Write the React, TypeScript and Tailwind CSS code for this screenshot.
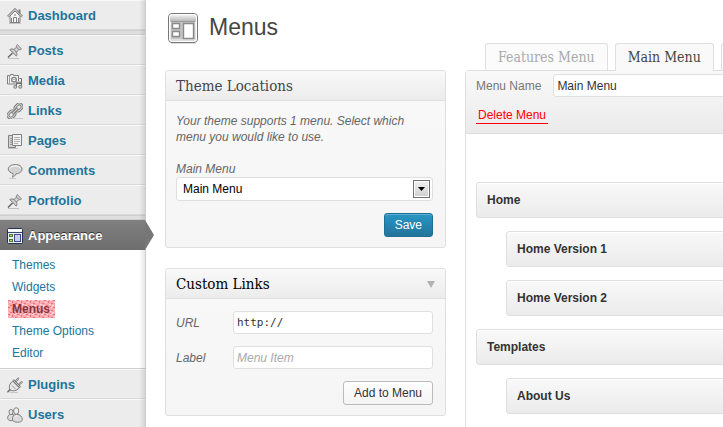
import React from "react";

const SERIF = "font-['DejaVu_Serif_Condensed','DejaVu_Serif',serif]";

function Icon({ children }: { children: React.ReactNode }) {
  return (
    <svg className="h-4 w-4 shrink-0" viewBox="0 0 16 16" fill="none" stroke="#808080" aria-hidden="true">
      {children}
    </svg>
  );
}

const HomeIcon = () => (
  <Icon>
    <path d="M3 8v6.5h10V8L8 3z" fill="#f4f4f4" />
    <path d="M0.8 8.6 8 1.4l7.2 7.2" strokeWidth="2.4" stroke="#8c8c8c" />
    <path d="M1 8.6 8 1.6l7 7" strokeWidth="0.8" stroke="#f4f4f4" />
    <path d="M12.5 1.5v4" strokeWidth="2" />
    <path d="M6.5 14V9.5h3V14M4.5 10v4M11.5 10v4" />
    <path d="M7 7h2" />
    <path d="M2 15.5h12" stroke="#c4c4c4" />
  </Icon>
);

const PinIcon = () => (
  <Icon>
    <path d="M1 14.500 5.500 10" strokeWidth="1.500" stroke="#666" />
    <path d="M2.800 6.600c1.500-.9 3-.7 4.200-.1l2.600-2.400c-.5-1-.3-1.800.6-2.500l4.300 4.300c-.8.8-1.700 1-2.600.6L9.400 9.200c.7 1.300.7 2.700-.1 4z" fill="#d2d2d2" />
    <path d="m7 6.500 2.400 2.700M9.600 4.100l2.300 2.400" />
    <path d="M4.500 8.200 8 11.600" stroke="#999" />
    <path d="M1 15.500h11" stroke="#c0c0c0" />
  </Icon>
);

const MediaIcon = () => (
  <Icon>
    <path d="M.5 2.500h3v-1h3v1h5v8.500H.5z" fill="#f2f2f2" />
    <path d="M2.500 2.500v8" stroke="#999" />
    <circle cx="7" cy="6.700" r="2.300" fill="#fff" strokeWidth="1.400" />
    <path d="M6.500 6.500h1" stroke="#666" />
    <path d="M10.500 14V9.500M11 9.500h4" stroke="#ececec" strokeWidth="3" />
    <path d="M9.500 14V9.200h5V13M9.500 10.500h5M12.500 5.500h2v4" stroke="#6e6e6e" />
    <circle cx="8.300" cy="13.800" r="1.500" fill="#ccc" />
    <circle cx="13.300" cy="13.800" r="1.500" fill="#ccc" />
  </Icon>
);

const LinkIcon = () => (
  <Icon>
    <g transform="rotate(-45 8 8)">
      <rect x="-.8" y="5.300" width="7.600" height="5.400" rx="2.700" stroke="#757575" strokeWidth="2.800" />
      <rect x="9.200" y="5.300" width="7.600" height="5.400" rx="2.700" stroke="#757575" strokeWidth="2.800" />
      <rect x="-.8" y="5.300" width="7.600" height="5.400" rx="2.700" stroke="#dadada" strokeWidth="1" />
      <rect x="9.200" y="5.300" width="7.600" height="5.400" rx="2.700" stroke="#dadada" strokeWidth="1" />
      <path d="M4 8h8" stroke="#757575" strokeWidth="2.800" />
      <path d="M4.500 8h7" stroke="#dadada" />
    </g>
    <path d="M5 15.500h11" stroke="#c8c8c8" />
  </Icon>
);

const PagesIcon = () => (
  <Icon>
    <path d="M1.500 2.500h7v12h-7z" fill="#d4d4d4" />
    <path d="M3 5.500h2M3 7.500h2M3 9.500h2M3 11.500h2" stroke="#999" />
    <path d="M5.500 1.500h9v11h-9z" fill="#f4f4f4" />
    <path d="M7 4.500h6M7 6.500h6M7 8.500h6M7 10.500h4" stroke="#b0b0b0" />
    <path d="M1 15.500h10" stroke="#c4c4c4" />
  </Icon>
);

const CommentIcon = () => (
  <Icon>
    <path d="M8.300 1.500c4 0 6.700 1.900 6.700 4.600s-2.500 4.600-6 4.700c-.6 1.600-2 2.900-3.800 3.400.8-1.200 1-2.400.8-3.700C3.200 9.900 1.300 8.300 1.300 6.100c0-2.700 3-4.600 7-4.600z" fill="#d2d2d2" />
    <path d="M3 5.500c.6-1.600 2.600-2.500 5.200-2.500 2.700 0 4.600.9 5.200 2.500" stroke="#fff" />
    <path d="M2 15.500h7" stroke="#c8c8c8" />
  </Icon>
);

const AppearanceIcon = () => (
  <Icon>
    <rect x=".5" y=".5" width="15" height="15" rx="1" fill="#e9eef6" stroke="#27304d" />
    <path d="M1 2.500h14" stroke="#fff" strokeWidth="2" />
    <path d="M1 4.500h14" stroke="#3c4666" />
    <rect x="2.500" y="6.500" width="3" height="2" fill="#b9dd8a" stroke="#4b7a2c" />
    <rect x="2.500" y="11.500" width="3" height="2" fill="#b9dd8a" stroke="#4b7a2c" />
    <rect x="7.500" y="6.500" width="6" height="7" fill="#c5ccf4" stroke="#3c4996" />
  </Icon>
);

const PlugIcon = () => (
  <Icon>
    <path d="M.3 15c1.200-.3 1.700-1.300 3-2.800" stroke="#777" strokeWidth="1.800" />
    <path d="m8.800 4.200 3-3.200M12 7.500l3.300-3" strokeWidth="2" stroke="#777" />
    <path d="m9 4 2.600-2.800M12.200 7.300l2.900-2.600" strokeWidth=".7" stroke="#eee" />
    <path d="M3 12.800C1.600 9.900 2.400 6.800 5.700 4l6.600 6.800c-2.900 3.300-6.300 3.700-9.300 2z" fill="#e6e6e6" stroke="#707070" />
    <path d="m6.200 3 7 7.200" stroke="#707070" strokeWidth="2" />
    <path d="m6.400 3.300 6.400 6.600" stroke="#eee" strokeWidth=".7" />
    <path d="M5 8.500 8.500 12" stroke="#999" />
    <path d="M3 15.500h8" stroke="#c8c8c8" />
  </Icon>
);

const UsersIcon = () => (
  <Icon>
    <path d="M.7 11.500C.5 9 1.500 7.700 3.600 7.500h3v5.800c-2.500.9-5.300.5-5.900-1.800z" fill="#dcdcdc" />
    <ellipse cx="4" cy="5" rx="2" ry="2.600" fill="#e8e8e8" />
    <ellipse cx="9.200" cy="4" rx="2.600" ry="3.300" fill="#eee" />
    <path d="M5.500 12.700c-.4-3 1.200-5.200 4.200-5.400 3.400-.1 5.600 2.400 5.600 5.400 0 3.300-9.200 3.500-9.800 0z" fill="#dcdcdc" />
    <path d="M7.500 10c.7-.9 1.500-1.300 2.700-1.300" stroke="#fff" />
  </Icon>
);

function MenuLink({ icon, label, active }: { icon: React.ReactNode; label: string; active?: boolean }) {
  return (
    <a
      href="#"
      aria-current={active ? "page" : undefined}
      className={
        active
          ? "relative flex h-[30px] items-center gap-[5px] bg-linear-to-b from-[#808080] to-[#6d6d6d] pt-[2px] pl-[7px] text-[13px] font-bold text-white"
          : "flex h-[30px] items-center gap-[5px] border-t border-b border-t-[#f9f9f9] border-b-[#d9d9d9] pt-[2px] pl-[7px] text-[13px] font-bold text-[#21759b]"
      }
    >
      {icon}
      <span className={active ? "[text-shadow:0_-1px_0_#333]" : ""}>{label}</span>
      {active && (
        <svg className="absolute top-0 left-full h-[30px] w-[9px]" viewBox="0 0 9 30" aria-hidden="true">
          <path d="M0 0 9 15 0 30z" fill="#777" />
        </svg>
      )}
    </a>
  );
}

const Separator = () => <div className="h-[5px] border-t border-b border-[#cfcfcf] bg-[#dfdfdf]" />;

function Sidebar() {
  return (
    <nav className="relative w-[146px] shrink-0 border-r border-[#ccc] bg-[#ececec]">
      <div className="pointer-events-none absolute inset-y-0 right-0 w-[6px] bg-linear-to-r from-black/0 to-black/10" />
      <MenuLink icon={<HomeIcon />} label="Dashboard" />
      <Separator />
      <MenuLink icon={<PinIcon />} label="Posts" />
      <MenuLink icon={<MediaIcon />} label="Media" />
      <MenuLink icon={<LinkIcon />} label="Links" />
      <MenuLink icon={<PagesIcon />} label="Pages" />
      <MenuLink icon={<CommentIcon />} label="Comments" />
      <MenuLink icon={<PinIcon />} label="Portfolio" />
      <Separator />
      <MenuLink icon={<AppearanceIcon />} label="Appearance" active />
      <ul className="border-b border-[#d0d0d0] bg-white py-1 pl-2 text-xs leading-[22px] text-[#21759b]">
        <li><a href="#" className="px-1">Themes</a></li>
        <li><a href="#" className="px-1">Widgets</a></li>
        <li className="flex h-[22px] items-center">
          <a href="#" className="relative pr-[5px] pl-1 leading-[18px] font-bold text-[#863543]">
            <svg className="absolute inset-0 h-full w-full" aria-hidden="true">
              <defs>
                <pattern id="speckle" width="9" height="7" patternUnits="userSpaceOnUse">
                  <rect width="9" height="7" fill="#fbaab0" />
                  <path d="M0 0h2v1H0zM4 1h1v2H4zM7 3h2v1H7zM2 5h2v1H2zM6 6h1v1H6z" fill="#f0707c" />
                  <path d="M3 0h1v1H3zM6 0h2v1H6zM1 2h2v1H1zM5 4h2v1H5zM0 5h1v1H0zM8 5h1v2H8z" fill="#fdd4d8" />
                </pattern>
              </defs>
              <rect width="100%" height="100%" fill="url(#speckle)" />
            </svg>
            <span className="relative">Menus</span>
          </a>
        </li>
        <li><a href="#" className="px-1">Theme Options</a></li>
        <li><a href="#" className="px-1">Editor</a></li>
      </ul>
      <MenuLink icon={<PlugIcon />} label="Plugins" />
      <MenuLink icon={<UsersIcon />} label="Users" />
    </nav>
  );
}

function Box({ title, muted, toggle, children }: { title: string; muted?: boolean; toggle?: boolean; children: React.ReactNode }) {
  return (
    <section className="rounded-[3px] border border-[#dfdfdf] bg-linear-to-b from-[#f9f9f9] to-[#f5f5f5]">
      <header className="flex h-[30px] items-center justify-between rounded-t-[3px] border-b border-[#dfdfdf] bg-linear-to-b from-[#f9f9f9] to-[#ececec] px-[10px] pt-[2px]">
        <h3 className={`${SERIF} text-[15px] ${muted ? "text-[#464646]" : "text-black"}`}>{title}</h3>
        {toggle && (
          <button type="button" aria-label="Toggle panel">
            <svg className="h-[7px] w-[8px]" viewBox="0 0 8 7" aria-hidden="true">
              <path d="M0 0h8L4 7z" fill="#b2b2b2" />
            </svg>
          </button>
        )}
      </header>
      {children}
    </section>
  );
}

const FIELD = "h-[23px] min-w-0 rounded-[3px] border border-[#dfdfdf] bg-white px-[3px] text-xs text-[#333]";

const menuItems = [
  { label: "Home", child: false },
  { label: "Home Version 1", child: true },
  { label: "Home Version 2", child: true },
  { label: "Templates", child: false },
  { label: "About Us", child: true },
];

export default function App() {
  return (
    <div className="flex h-screen overflow-hidden bg-white font-['Liberation_Sans',Arial,sans-serif] text-xs text-[#333]">
      <Sidebar />
      <main className="min-w-0 flex-1 pl-[19px]">
        <div className="flex items-start">
          <div className="w-[281px] shrink-0">
            <div className="flex h-[70px] items-start gap-[10px] pt-3 pl-[2px]">
              <svg className="h-8 w-8" viewBox="0 0 32 32" aria-hidden="true">
                <defs>
                  <linearGradient id="frame" x1="0" y1="0" x2="0" y2="1">
                    <stop offset="0" stopColor="#fff" />
                    <stop offset=".25" stopColor="#bbb" />
                    <stop offset=".3" stopColor="#eee" />
                    <stop offset="1" stopColor="#ddd" />
                  </linearGradient>
                </defs>
                <path d="M4 31.500h25" stroke="#ddd" />
                <rect x="1.500" y="1.500" width="29" height="29" rx="3.500" fill="url(#frame)" stroke="#777" />
                <rect x="2.500" y="2.500" width="27" height="27" rx="2.500" fill="none" stroke="#fff" />
                <path d="M4 9h24v18H4z" fill="#c4c4c4" />
                <path d="M4 9.500h24" stroke="#999" />
                <path d="M5.500 11.500h7v5h-7zM5.500 19.500h7v5h-7zM16.500 11.500h10v15h-10z" fill="#fff" stroke="#8a8a8a" strokeWidth="1.400" />
              </svg>
              <h2 className="text-[23px] leading-[30px] text-[#464646]">Menus</h2>
            </div>
            <div className="flex flex-col gap-5">
              <Box title="Theme Locations" muted>
                <form className="flex flex-col pt-3 pr-3 pb-[10px] pl-[10px]">
                  <p className="leading-4 text-[#666] italic">
                    Your theme supports 1 menu. Select which menu you would like to use.
                  </p>
                  <label htmlFor="location" className="mt-4 leading-4 text-[#666] italic">Main Menu</label>
                  <div className="relative">
                    <select id="location" className="h-6 w-full appearance-none rounded-[3px] border border-[#dfdfdf] bg-white pl-[6px] text-xs text-black">
                      <option>Main Menu</option>
                    </select>
                    <span className="pointer-events-none absolute top-[3px] right-[3px] flex h-[18px] w-[17px] items-center justify-center border border-[#707070] bg-linear-to-b from-[#f2f2f2] to-[#cfcfcf] shadow-[inset_0_0_0_1px_#fff]">
                      <svg className="h-1 w-[7px]" viewBox="0 0 7 4" aria-hidden="true">
                        <path d="M0 0h7L3.500 4z" fill="#000" />
                      </svg>
                    </span>
                  </div>
                  <button type="button" className="mt-3 h-6 self-end rounded-[3px] border border-[#1f6f95] bg-linear-to-b from-[#2a95c5] to-[#21759b] px-[10px] text-white shadow-[inset_0_1px_0_#5aaed3]">
                    Save
                  </button>
                </form>
              </Box>
              <Box title="Custom Links" toggle>
                <form className="flex flex-col gap-3 pt-3 pr-3 pb-[10px] pl-[10px]">
                  <div className="flex items-center">
                    <label htmlFor="url" className="w-[57px] shrink-0 text-[#666] italic">URL</label>
                    <input id="url" defaultValue="http://" className={`${FIELD} flex-1 font-['DejaVu_Sans_Mono',monospace] text-[11px]`} />
                  </div>
                  <div className="flex items-center">
                    <label htmlFor="label" className="w-[57px] shrink-0 text-[#666] italic">Label</label>
                    <input id="label" placeholder="Menu Item" className={`${FIELD} flex-1 italic placeholder:text-[#aaa]`} />
                  </div>
                  <button type="button" className="h-6 self-end rounded-[3px] border border-[#bbb] bg-linear-to-b from-white to-[#f4f4f4] px-[10px]">
                    Add to Menu
                  </button>
                </form>
              </Box>
            </div>
          </div>

          <div className="ml-[19px] min-w-[320px] flex-1 pt-[43px]">
            <div className={`${SERIF} flex h-7 gap-[7px] pl-5 text-[14px]`}>
              <a href="#" className="h-[27px] shrink-0 rounded-t-[3px] border border-b-0 border-[#dfdfdf] bg-[#fbfbfb] px-3 leading-[26px] text-[#aaa]">Features Menu</a>
              <a href="#" className="relative h-7 shrink-0 rounded-t-[3px] border border-b-0 border-[#dfdfdf] bg-[#f9f9f9] px-3 leading-[26px] text-[#464646]">Main Menu</a>
              <a href="#" aria-label="Add menu" className="h-[27px] w-8 shrink-0 rounded-t-[3px] border border-b-0 border-[#dfdfdf] bg-[#fbfbfb]" />
            </div>
            <div className="-mt-px h-screen rounded-tl-[3px] border border-[#dfdfdf]">
              <div className="h-[63px] border-b border-[#dfdfdf] bg-linear-to-b from-[#f9f9f9] to-[#ebebeb] px-[10px] pt-[3px]">
                <div className="flex items-center gap-3">
                  <label htmlFor="menu-name" className="shrink-0 text-[#777]">Menu Name</label>
                  <input id="menu-name" defaultValue="Main Menu" className={`${FIELD} flex-1`} />
                </div>
                <a href="#" className="mt-[10px] inline-block border-b border-[#f00] px-[2px] leading-4 text-[#f00]">Delete Menu</a>
              </div>
              <ul className="flex flex-col gap-[13px] pt-12 pl-[10px]">
                {menuItems.map((m) => (
                  <li
                    key={m.label}
                    className={`flex h-9 items-center rounded-[3px] border border-[#dfdfdf] bg-linear-to-b from-[#f9f9f9] to-[#ebebeb] px-[10px] font-bold shadow-[inset_0_1px_0_#fff] ${m.child ? "ml-[30px]" : ""}`}
                  >
                    {m.label}
                  </li>
                ))}
              </ul>
            </div>
          </div>
        </div>
      </main>
    </div>
  );
}
